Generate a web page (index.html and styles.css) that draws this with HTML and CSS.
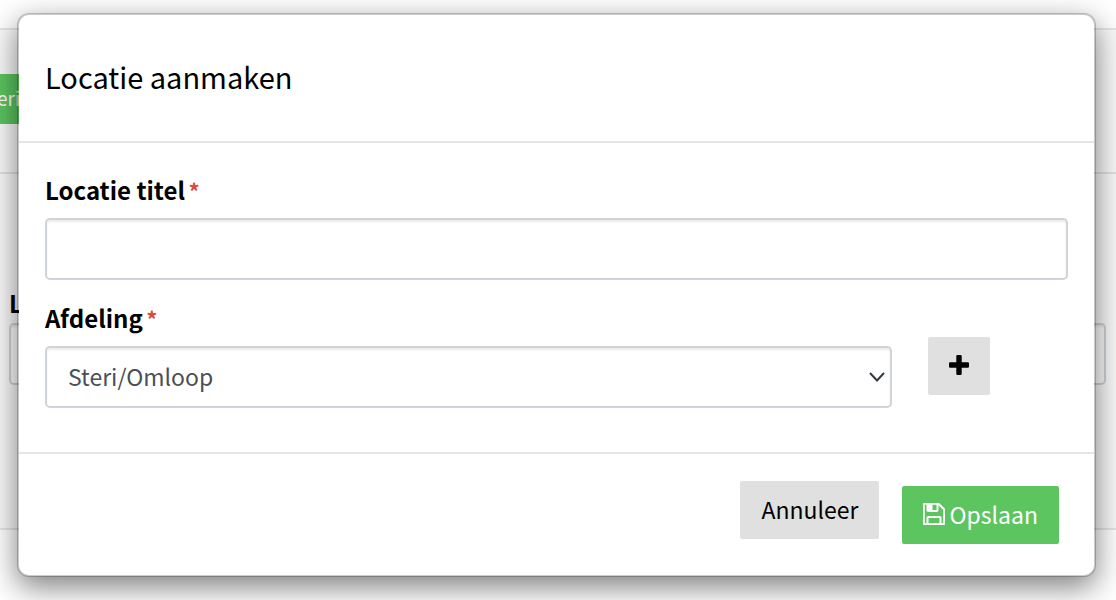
FILE: index.html
```
<!DOCTYPE html>
<html lang="nl">
<head>
    <meta charset="UTF-8">
    <meta name="viewport" content="width=device-width, initial-scale=1.0">
    <title>Locatie aanmaken</title>
    <link rel="stylesheet" href="styles.css">
</head>
<body>
    <!-- page behind the dialog -->
    <main class="page" inert>
        <div class="toolbar">
            <button type="button" class="btn btn-material">eria</button>
        </div>
        <div class="page-form">
            <label for="pageLocation">L</label>
            <input type="text" id="pageLocation" class="form-control">
        </div>
    </main>

    <div class="modal" role="dialog" aria-labelledby="modalTitle">
        <form class="modal-content">
            <div class="modal-header">
                <h1 id="modalTitle">Locatie aanmaken</h1>
            </div>
            <div class="modal-body">
                <div class="form-group">
                    <label for="title">Locatie titel <span class="required">*</span></label>
                    <input type="text" id="title" class="form-control">
                </div>
                <div class="form-row">
                    <div class="form-group grow">
                        <label for="department">Afdeling <span class="required">*</span></label>
                        <div class="select-wrap">
                            <select id="department" class="form-control">
                                <option>Steri/Omloop</option>
                            </select>
                            <svg class="chevron" viewBox="0 0 16 10" aria-hidden="true"><path d="M1 1l7 7.5L15 1"/></svg>
                        </div>
                    </div>
                    <button type="button" class="btn btn-default btn-add" aria-label="Afdeling toevoegen">
                        <svg class="plus" viewBox="0 0 20 20" aria-hidden="true"><path d="M8.5 0h3a1.2 1.2 0 0 1 1.2 1.2v6.1h6.1A1.2 1.2 0 0 1 20 8.5v3a1.2 1.2 0 0 1-1.2 1.2h-6.1v6.1a1.2 1.2 0 0 1-1.2 1.2h-3a1.2 1.2 0 0 1-1.2-1.2v-6.1H1.2A1.2 1.2 0 0 1 0 11.5v-3a1.2 1.2 0 0 1 1.2-1.2h6.1V1.2A1.2 1.2 0 0 1 8.5 0z"/></svg>
                    </button>
                </div>
            </div>
            <div class="modal-footer">
                <button type="button" class="btn btn-default">Annuleer</button>
                <button type="submit" class="btn btn-success">
                    <svg class="floppy" viewBox="0 0 22 22" aria-hidden="true">
                        <path d="M1.6.8H15q.6 0 1 .4L20.800 6q.4.4.4 1v13.400q0 .8-.8.8H1.600q-.8 0-.8-.8V1.600Q.8.8 1.600.8z"/>
                        <path d="M4.500 21v-6.200q0-.8.8-.8h11.400q.8 0 .8.8V21M4.500 1v6.200q0 .8.8.8h8.400q.8 0 .8-.8V1"/>
                        <path class="solid" d="M4.500 1h5v6.500h-5z"/>
                    </svg>
                    Opslaan
                </button>
            </div>
        </form>
    </div>
</body>
</html>
```

FILE: styles.css
```
* {
    box-sizing: border-box;
}
body {
    margin: 0;
    min-height: 100vh;
    overflow: hidden;
    background: #fff;
    color: #000;
    font-family: "Noto Sans CJK SC", "Open Sans", sans-serif;
    font-size: 23px;
}
label {
    display: block;
    height: 32px;
    margin-bottom: 12px;
    font-size: 24px;
    font-weight: bold;
    line-height: 32px;
}
.required {
    margin-left: -2px;
    color: #dd4b39;
    font-size: 22px;
}
.form-control {
    display: block;
    width: 100%;
    height: 62px;
    padding: 0 21px 2px;
    border: 2px solid #ced4da;
    border-radius: 5px;
    background: #fff;
    box-shadow: inset 0 2px 2px rgba(0, 0, 0, 0.075);
    color: #495057;
    font: inherit;
}
.btn {
    display: flex;
    align-items: center;
    justify-content: center;
    height: 58px;
    padding: 0 21px 2px;
    border: 0;
    border-radius: 2px;
    font: inherit;
    line-height: 32px;
}
.btn-default {
    background: #e0e0e0;
    color: #000;
}
.btn-success {
    gap: 4px;
    background: #5cc560;
    color: #fff;
}

/* page behind the dialog */
.page {
    margin-top: 28px;
    border-top: 2px solid #e4e5e7;
    border-bottom: 2px solid #e4e5e7;
    background: #fafafa;
}
.toolbar {
    padding: 44px 0 48px;
    border-bottom: 2px solid #dee2e6;
}
.btn-material {
    height: 50px;
    padding: 0 0 2px;
    margin-left: -3px;
    background: #5cc560;
    color: #fff;
    font-size: 19px;
}
.page-form {
    padding: 113px 10px 143px 9px;
}
.page-form label {
    margin-bottom: 4px;
}

.modal {
    position: absolute;
    top: 13px;
    left: 17px;
    right: 20px;
}
.modal-content {
    border: 2px solid rgba(0, 0, 0, 0.2);
    border-radius: 12px;
    background: #fff;
    background-clip: padding-box;
    box-shadow: 0 10px 30px rgba(0, 0, 0, 0.5);
}
.modal-header {
    padding: 42px 26px 46px;
    border-bottom: 2px solid #e5e5e5;
}
.modal-header h1 {
    margin: 0;
    font-size: 29px;
    font-weight: normal;
    line-height: 38px;
}
.modal-body {
    padding: 31px 26px 44px;
}
.form-row {
    display: flex;
    align-items: flex-start;
    gap: 36px;
    margin-top: 22px;
    padding-right: 78px;
}
.grow {
    flex: 1;
}
.select-wrap {
    position: relative;
}
select.form-control {
    appearance: none;
}
.chevron {
    position: absolute;
    top: 26px;
    right: 7px;
    width: 16px;
    height: 10px;
    fill: none;
    stroke: #343a40;
    stroke-width: 2;
    pointer-events: none;
}
.btn-add {
    margin-top: 35px;
}
.plus {
    width: 20px;
    height: 20px;
}
.modal-footer {
    display: flex;
    align-items: flex-start;
    justify-content: flex-end;
    gap: 23px;
    padding: 27px 35px 31px;
    border-top: 2px solid #e5e5e5;
}
.modal-footer .btn-success {
    margin-top: 5px;
}
.floppy {
    width: 22px;
    height: 22px;
    fill: none;
    stroke: #fff;
    stroke-width: 2;
}
.floppy .solid {
    fill: #fff;
    stroke: none;
}
```
